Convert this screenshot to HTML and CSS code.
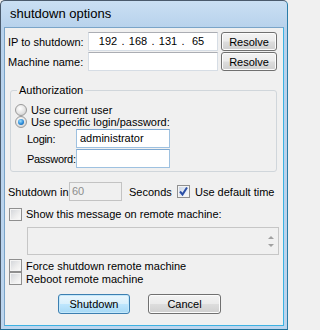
FILE: index.html
```html
<!DOCTYPE html>
<html>
<head>
<meta charset="utf-8">
<link rel="stylesheet" href="styles.css">
</head>
<body>
<div class="window">
  <div class="titlebar">shutdown options</div>
  <div class="client">
    <div class="row">
      <span class="label">IP to shutdown:</span>
      <div class="field ipfield">
        <span class="oct">192</span><span class="dot">.</span><span class="oct">168</span><span class="dot">.</span><span class="oct">131</span><span class="dot">.</span><span class="oct">65</span>
      </div>
      <span class="btn resolve">Resolve</span>
    </div>
    <div class="row row2">
      <span class="label">Machine name:</span>
      <div class="field namefield"></div>
      <span class="btn resolve">Resolve</span>
    </div>
    <div class="group">
      <span class="legend">Authorization</span>
      <div class="radio-row first"><span class="radio"></span>Use current user</div>
      <div class="radio-row"><span class="radio on"></span>Use specific login/password:</div>
      <div class="cred-row"><span class="cred-label">Login:</span><div class="field cred">administrator</div></div>
      <div class="cred-row row2"><span class="cred-label">Password:</span><div class="field cred"></div></div>
    </div>
    <div class="row timer">
      <span class="timer-label">Shutdown in</span>
      <div class="field disabled">60</div>
      <span class="seconds">Seconds</span>
      <span class="check on"><svg width="11" height="11" viewBox="0 0 11 11"><path d="M2 5.5 L4.5 8.5 L9 1.5" fill="none" stroke="#2b4fa6" stroke-width="2"/></svg></span>
      <span class="check-text">Use default time</span>
    </div>
    <div class="check-row show"><span class="check"></span>Show this message on remote machine:</div>
    <div class="memo">
      <div class="scroll">
        <span class="arr up"></span>
        <span class="arr down"></span>
      </div>
    </div>
    <div class="check-row force"><span class="check"></span>Force shutdown remote machine</div>
    <div class="check-row"><span class="check"></span>Reboot remote machine</div>
    <div class="buttons">
      <span class="btn big focus">Shutdown</span>
      <span class="btn big cancel">Cancel</span>
    </div>
  </div>
</div>
</body>
</html>
```

FILE: styles.css
```css
html, body {
  margin: 0;
  padding: 0;
  background: #f0f0f0;
}
body {
  font-family: "Liberation Sans", Arial, sans-serif;
  font-size: 11px;
  color: #000;
}
.window {
  width: 288px;
  height: 330px;
  box-sizing: border-box;
  border: 1px solid #4a5a6c;
  border-radius: 5px 5px 0 0;
  border-bottom-color: #1f6f98;
  border-right-color: #2a7ca8;
  background: linear-gradient(#cadff3, #b8d2ec 26px, #bcd5ee);
  padding: 0 3px 3px 3px;
  display: flex;
  flex-direction: column;
  overflow: hidden;
}
.titlebar {
  height: 26px;
  line-height: 25px;
  font-size: 13px;
  padding-left: 6px;
  color: #000;
  flex: none;
}
.client {
  flex: 1;
  min-width: 0;
  background: #f0f0f0;
  border: 1px solid #7aa4c8;
  border-bottom-color: #3cb2e2;
  border-right-color: #3cb2e2;
  padding: 4px 0 0 0;
  display: flex;
  flex-direction: column;
  align-items: flex-start;
}
.row {
  display: flex;
  align-items: center;
  height: 19px;
  white-space: nowrap;
}
.row2 {
  margin-top: 1px;
}
.label {
  box-sizing: border-box;
  width: 83px;
  padding-left: 3px;
  flex: none;
}
.field {
  box-sizing: border-box;
  height: 19px;
  background: #fff;
  border: 1px solid #d6dde5;
  border-top-color: #abadb3;
  line-height: 17px;
  padding-left: 3px;
  flex: none;
}
.ipfield {
  width: 130px;
  display: flex;
  padding: 0 6px;
}
.oct {
  flex: 1;
  text-align: center;
}
.dot {
  width: 4px;
  text-align: center;
}
.namefield {
  width: 130px;
}
.btn {
  box-sizing: border-box;
  display: flex;
  align-items: center;
  justify-content: center;
  border: 1px solid #707070;
  border-radius: 3px;
  background: linear-gradient(#f3f3f3 0%, #ebebeb 48%, #dddddd 52%, #cfcfcf 100%);
  box-shadow: inset 0 0 0 1px #fcfcfc;
  flex: none;
}
.resolve {
  width: 56px;
  height: 19px;
  margin-left: 3px;
}
.group {
  box-sizing: border-box;
  width: 267px;
  margin: 19px 0 0 5px;
  padding: 0 0 3px 0;
  border: 1px solid #d0d6db;
  border-radius: 3px;
  position: relative;
}
.legend {
  position: absolute;
  left: 6px;
  top: -7px;
  padding: 0 2px;
  line-height: 13px;
  background: #f0f0f0;
}
.radio-row {
  display: flex;
  align-items: center;
  height: 12px;
  white-space: nowrap;
}
.radio-row.first {
  margin-top: 13px;
}
.radio {
  box-sizing: border-box;
  width: 12px;
  height: 12px;
  border-radius: 50%;
  border: 1px solid #9a9a9a;
  background: radial-gradient(circle at 40% 35%, #ffffff 0%, #e6e6e6 50%, #c8c8c8 100%);
  margin: 0 4px 0 4px;
  display: flex;
  align-items: center;
  justify-content: center;
  flex: none;
}
.radio.on::after {
  content: "";
  width: 6px;
  height: 6px;
  border-radius: 50%;
  background: radial-gradient(circle at 40% 35%, #9fe0ff 0%, #2a8ad8 55%, #0b4a8e 100%);
}
.cred-row {
  display: flex;
  align-items: center;
  margin-top: 1px;
  white-space: nowrap;
}
.cred-label {
  box-sizing: border-box;
  width: 65px;
  padding-left: 16px;
  flex: none;
  letter-spacing: -0.3px;
}
.cred {
  width: 94px;
  border: 1px solid #9ec1e0;
  border-top-color: #7ea9d2;
}
.timer {
  margin-top: 10px;
}
.timer-label {
  box-sizing: border-box;
  width: 64px;
  padding-left: 3px;
  flex: none;
}
.disabled {
  width: 53px;
  background: #f0f0f0;
  border: 1px solid #c3c3c3;
  color: #8d8d8d;
  padding-left: 2px;
}
.seconds {
  box-sizing: border-box;
  width: 55px;
  padding-left: 7px;
  flex: none;
}
.check {
  box-sizing: border-box;
  width: 13px;
  height: 13px;
  border: 1px solid #8f8f8f;
  background: linear-gradient(135deg, #d0d3d8 0%, #eeeeee 60%, #fbfbfb 100%);
  box-shadow: inset 0 0 0 1px #f4f4f4;
  display: flex;
  align-items: center;
  justify-content: center;
  flex: none;
}
.check.on {
  background: linear-gradient(135deg, #c9d4e6 0%, #eef2f8 70%, #fbfbfb 100%);
}
.check-text {
  margin-left: 5px;
}
.check-row {
  display: flex;
  align-items: center;
  height: 13px;
  white-space: nowrap;
}
.check-row .check {
  margin: 0 4px 0 4px;
}
.show {
  margin-top: 6px;
  height: 14px;
}
.memo {
  box-sizing: border-box;
  width: 252px;
  height: 28px;
  margin: 6px 0 0 22px;
  background: #f0f0f0;
  border: 1px solid #c6c6c6;
  display: flex;
  justify-content: flex-end;
}
.scroll {
  width: 14px;
  display: flex;
  flex-direction: column;
  align-items: center;
  justify-content: center;
  gap: 5px;
}
.arr {
  width: 0;
  height: 0;
  border-left: 3px solid transparent;
  border-right: 3px solid transparent;
}
.arr.up {
  border-bottom: 3px solid #a0a0a0;
}
.arr.down {
  border-top: 3px solid #a0a0a0;
}
.force {
  margin-top: 4px;
}
.buttons {
  display: flex;
  margin-top: 9px;
}
.big {
  height: 20px;
  width: 72px;
}
.focus {
  margin-left: 53px;
  border-color: #3c7fb1;
  background: linear-gradient(#eaf6fd 0%, #d9f0fc 48%, #bee6fd 52%, #a7d9f5 100%);
  box-shadow: inset 0 0 0 1px #c4e8fb;
}
.cancel {
  margin-left: 18px;
  width: 73px;
}
```
